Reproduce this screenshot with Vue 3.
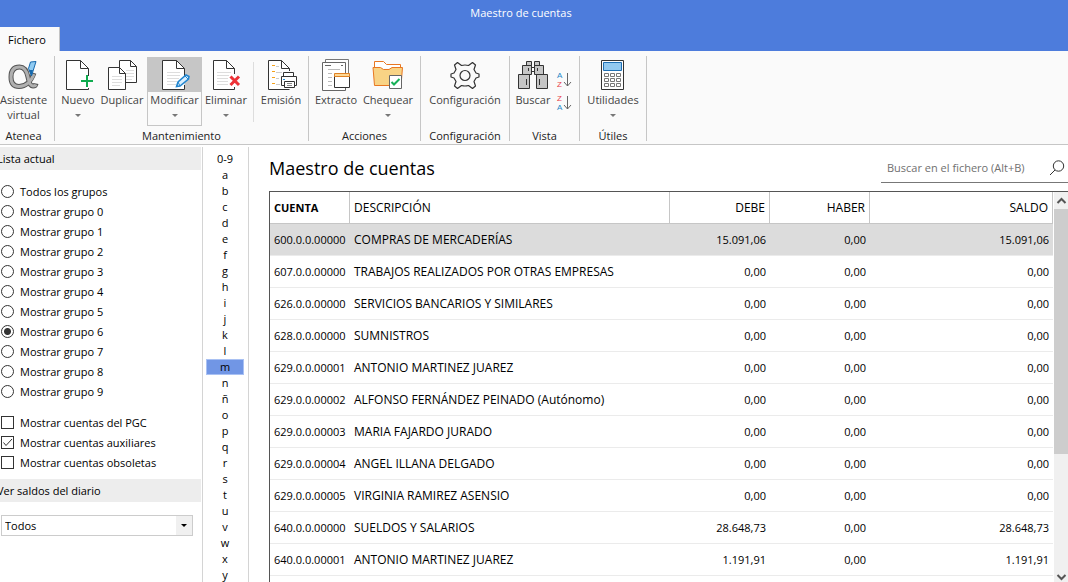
<script setup>
import { ref } from 'vue'

const groupOptions = ['Todos los grupos', ...Array.from({ length: 10 }, (_, i) => `Mostrar grupo ${i}`)]
const group = ref('Mostrar grupo 6')

const checks = ref([
  { label: 'Mostrar cuentas del PGC', on: false },
  { label: 'Mostrar cuentas auxiliares', on: true },
  { label: 'Mostrar cuentas obsoletas', on: false },
])

const diary = ref('Todos')
const search = ref('')
const letters = ['0-9', ...'abcdefghijklmnñopqrstuvwxy']
const letter = ref('m')

const selected = ref(0)
const rows = [
  ['600.0.0.00000', 'COMPRAS DE MERCADERÍAS', '15.091,06', '0,00', '15.091,06'],
  ['607.0.0.00000', 'TRABAJOS REALIZADOS POR OTRAS EMPRESAS', '0,00', '0,00', '0,00'],
  ['626.0.0.00000', 'SERVICIOS BANCARIOS Y SIMILARES', '0,00', '0,00', '0,00'],
  ['628.0.0.00000', 'SUMNISTROS', '0,00', '0,00', '0,00'],
  ['629.0.0.00001', 'ANTONIO MARTINEZ JUAREZ', '0,00', '0,00', '0,00'],
  ['629.0.0.00002', 'ALFONSO FERNÁNDEZ PEINADO (Autónomo)', '0,00', '0,00', '0,00'],
  ['629.0.0.00003', 'MARIA FAJARDO JURADO', '0,00', '0,00', '0,00'],
  ['629.0.0.00004', 'ANGEL ILLANA DELGADO', '0,00', '0,00', '0,00'],
  ['629.0.0.00005', 'VIRGINIA RAMIREZ ASENSIO', '0,00', '0,00', '0,00'],
  ['640.0.0.00000', 'SUELDOS Y SALARIOS', '28.648,73', '0,00', '28.648,73'],
  ['640.0.0.00001', 'ANTONIO MARTINEZ JUAREZ', '1.191,91', '0,00', '1.191,91'],
]
</script>

<template>
  <div class="app">
    <header class="titlebar">
      <div class="title">Maestro de cuentas</div>
      <nav class="tabs"><button class="tab">Fichero</button></nav>
    </header>

    <div class="ribbon">
      <section class="group atenea">
        <div class="tools">
          <button class="tool">
            <span class="icon">
              <svg width="32" height="32" viewBox="0 0 32 32" fill="none">
                <path d="M26 14 Q21 27.500 11 27.500 Q3 27.500 3 18 Q3 8 11.500 8 Q18 8 20 18 Q21.500 27 25 27 Q27.500 27 28 24.500" stroke="#555" stroke-width="5" />
                <path d="M26 15 Q21 27.500 11 27.500 Q3 27.500 3 18 Q3 8 11.500 8 Q18 8 20 18 Q21.500 27 25 27 Q27.500 27 28 25.500" stroke="#b0b0b0" stroke-width="3" />
                <path d="M22.500 3 L28 2.500 L23.500 17 L20.500 9.500 Z" fill="#8fcbf2" stroke="#1769ad" />
                <path d="M21 11 L25 11 L23.500 17 Z" fill="#1769ad" />
              </svg>
            </span>
            <span class="caption">Asistente<br>virtual</span>
          </button>
        </div>
        <h2>Atenea</h2>
      </section>

      <section class="group mant">
        <div class="tools start">
          <button class="tool w44">
            <span class="icon">
              <svg width="32" height="32" viewBox="0 0 32 32" fill="none">
                <path d="M26.500 17 V9.500 L18.500 1.500 H4.500 V30.500 H26.500 V29" fill="#fff" stroke="#333" />
                <path d="M18.500 1.500 V9.500 H26.500" stroke="#333" />
                <path d="M25 16 V28 M19 22 H31" stroke="#10ab4f" stroke-width="2" />
              </svg>
            </span>
            <span class="caption">Nuevo</span><i class="arrow"></i>
          </button>
          <button class="tool w44">
            <span class="icon">
              <svg width="32" height="32" viewBox="0 0 32 32" fill="none">
                <path d="M13.500 1.500 H24.500 L30.500 7.500 V23.500 H13.500 Z" fill="#fff" stroke="#333" />
                <path d="M24.500 1.500 V7.500 H30.500" stroke="#333" />
                <path d="M20 11.500 H28 M20 14.500 H28 M20 17.500 H28 M20 20.500 H26" stroke="#ddd" />
                <path d="M2.500 8.500 H13.500 L19.500 14.500 V30.500 H2.500 Z" fill="#fff" stroke="#333" />
                <path d="M13.500 8.500 V14.500 H19.500" stroke="#333" />
                <path d="M6 17.500 H16 M6 20.500 H16 M6 23.500 H16 M6 26.500 H14" stroke="#ddd" />
              </svg>
            </span>
            <span class="caption">Duplicar</span>
          </button>
          <button class="tool w55 active">
            <span class="icon">
              <svg width="32" height="32" viewBox="0 0 32 32" fill="none">
                <path d="M25.500 18 V9.500 L17.500 1.500 H3.500 V30.500 H25.500 V26" fill="#fff" stroke="#333" />
                <path d="M17.500 1.500 V9.500 H25.500" stroke="#333" />
                <path d="M8 13.500 H21 M8 16.500 H21 M8 19.500 H20 M8 22.500 H18 M8 25.500 H17" stroke="#ddd" />
                <path d="M17.500 27.500 L19 23 L27 16 L30 17.500 L29.500 20 L21 27 Z" fill="#d9efff" stroke="#2286cf" stroke-width="1.500" />
                <path d="M19 23 L21 27 M26 17 L29 20" stroke="#2286cf" />
              </svg>
            </span>
            <span class="caption">Modificar</span><i class="arrow"></i>
          </button>
          <button class="tool w48">
            <span class="icon">
              <svg width="32" height="32" viewBox="0 0 32 32" fill="none">
                <path d="M24.500 15 V9.500 L16.500 1.500 H3.500 V30.500 H24.500 V28" fill="#fff" stroke="#333" />
                <path d="M16.500 1.500 V9.500 H24.500" stroke="#333" />
                <path d="M7 13.500 H21 M7 16.500 H19 M7 19.500 H18 M7 22.500 H18 M7 25.500 H18" stroke="#ddd" />
                <path d="M20.500 17.500 L29 26 M29 17.500 L20.500 26" stroke="#ed3237" stroke-width="3" />
              </svg>
            </span>
            <span class="caption">Eliminar</span><i class="arrow"></i>
          </button>
          <span class="divider"></span>
          <button class="tool w54">
            <span class="icon">
              <svg width="32" height="32" viewBox="0 0 32 32" fill="none">
                <path d="M24.500 12 V9.500 L16.500 1.500 H3.500 V30.500 H24.500" fill="#fff" stroke="#333" />
                <path d="M16.500 1.500 V9.500 H24.500" stroke="#333" />
                <path d="M7 6.500 H10 M7 12.500 H10 M7 18.500 H10 M7 24.500 H10" stroke="#f5a21b" />
                <path d="M11 7.500 H14 M11 13.500 H17 M11 19.500 H14 M11 25.500 H15" stroke="#ccc" />
                <path d="M18.500 17.500 V13.500 H28.500 V17.500" fill="#fff" stroke="#333" />
                <path d="M16.500 17.500 H31.500 V26.500 H16.500 Z" fill="#fff" stroke="#333" />
                <path d="M19.500 22.500 H29.500 V28.500 H19.500 Z" fill="#fff" stroke="#333" />
                <path d="M22 24.500 H27 M22 26.500 H27" stroke="#888" />
                <path d="M18 20.500 H20" stroke="#1d8ad6" />
              </svg>
            </span>
            <span class="caption">Emisión</span>
          </button>
        </div>
        <h2>Mantenimiento</h2>
      </section>

      <section class="group acciones">
        <div class="tools start">
          <button class="tool w52">
            <span class="icon">
              <svg width="32" height="32" viewBox="0 0 32 32" fill="none">
                <path d="M5.500 0.500 H28.500 V28.500 H5.500 Z" fill="#fff" stroke="#777" />
                <path d="M2.500 3.500 H25.500 V31.500 H2.500 Z" fill="#fff" stroke="#666" />
                <path d="M5 6.500 H11 M21 6.500 H23" stroke="#666" />
                <path d="M8 10.500 H20 M8 14.500 H12 M8 18.500 H12 M8 22.500 H12 M8 26.500 H12" stroke="#bbb" />
                <path d="M14.500 17.500 H29.500 V28.500 H14.500 Z" fill="#fff" stroke="#333" />
                <path d="M14.500 14.500 H29.500 V17.500 H14.500 Z" fill="#fdd794" stroke="#df8124" />
              </svg>
            </span>
            <span class="caption">Extracto</span>
          </button>
          <button class="tool w52">
            <span class="icon">
              <svg width="32" height="32" viewBox="0 0 32 32" fill="none">
                <path d="M2.500 9 V2.500 H11.500 L14.500 5.500 H28.500 V9" fill="#fff" stroke="#e87722" />
                <path d="M1 8.500 H8.500 L11.500 10.500 H17 L20 8.500 H30.500 L29 26.500 H2.500 Z" fill="#f8d385" stroke="#e87722" />
                <path d="M17.500 16.500 H29.500 V29.500 H17.500 Z" fill="#fff" stroke="#666" />
                <path d="M19.500 23 L22 25.500 L27.500 20" stroke="#17b057" stroke-width="2" />
              </svg>
            </span>
            <span class="caption">Chequear</span><i class="arrow"></i>
          </button>
        </div>
        <h2>Acciones</h2>
      </section>

      <section class="group config">
        <div class="tools">
          <button class="tool">
            <span class="icon">
              <svg width="32" height="32" viewBox="0 0 32 32" fill="none" stroke="#333" stroke-width="1.200" stroke-linejoin="round">
                <path d="M8.500 3.500 L12.500 6.500 Q16 5.500 19.500 6.500 L23.500 3.500 L26.500 6 L25 10.500 L27 14 L30 15 V18 L27 19 L25 22.500 L26.500 27 L23.500 29.500 L19.500 26.500 Q16 27.500 12.500 26.500 L8.500 29.500 L5.500 27 L7 22.500 L5 19 L2 18 V15 L5 14 L7 10.500 L5.500 6 Z" />
                <circle cx="16" cy="16.500" r="5" />
              </svg>
            </span>
            <span class="caption">Configuración</span>
          </button>
        </div>
        <h2>Configuración</h2>
      </section>

      <section class="group vista">
        <div class="tools start">
          <button class="tool w46">
            <span class="icon">
              <svg width="32" height="32" viewBox="0 0 32 32" stroke="#333" fill="#c6c6c6">
                <path d="M9.500 2.500 H14.500 V7.500 H9.500 Z M17.500 2.500 H22.500 V7.500 H17.500 Z" />
                <path d="M14.500 8.500 H17.500 V12.500 H14.500 Z" fill="#fff" />
                <path d="M5.500 6.500 H14.500 V15.500 H5.500 Z M17.500 6.500 H26.500 V15.500 H17.500 Z" />
                <path d="M1.500 15.500 H12.500 V29.500 H1.500 Z M19.500 15.500 H30.500 V29.500 H19.500 Z" />
                <path d="M11.500 9 V12 M20.500 9 V12 M9.500 20 V26 M22.500 20 V26" />
              </svg>
            </span>
            <span class="caption">Buscar</span>
          </button>
          <div class="sorts">
            <button aria-label="Orden ascendente">
              <svg width="16" height="20" viewBox="0 0 16 20">
                <text x="1" y="8" class="glyph" fill="#2688c8">A</text>
                <text x="1" y="17" class="glyph" fill="#e8424a">Z</text>
                <path d="M11.500 3 V16 M8 12 L11.500 16 L15 12" fill="none" stroke="#666" />
              </svg>
            </button>
            <button aria-label="Orden descendente">
              <svg width="16" height="20" viewBox="0 0 16 20">
                <text x="1" y="8" class="glyph" fill="#e8424a">Z</text>
                <text x="1" y="17" class="glyph" fill="#2688c8">A</text>
                <path d="M11.500 3 V16 M8 12 L11.500 16 L15 12" fill="none" stroke="#666" />
              </svg>
            </button>
          </div>
        </div>
        <h2>Vista</h2>
      </section>

      <section class="group utiles">
        <div class="tools">
          <button class="tool">
            <span class="icon">
              <svg width="32" height="32" viewBox="0 0 32 32" fill="none">
                <path d="M4.500 1.500 H26.500 V30.500 H4.500 Z" fill="#fff" stroke="#333" />
                <path d="M6.500 3.500 H24.500 V11.500 H6.500 Z" fill="#92c9f0" stroke="#1e6fb4" />
                <path d="M7.500 14.500 h4 v3 h-4 z m6 0 h4 v3 h-4 z m6 0 h4 v3 h-4 z M7.500 19.500 h4 v3 h-4 z m6 0 h4 v3 h-4 z m6 0 h4 v3 h-4 z M7.500 24.500 h4 v3 h-4 z m6 0 h4 v3 h-4 z m6 0 h4 v3 h-4 z" stroke="#777" />
              </svg>
            </span>
            <span class="caption">Utilidades</span><i class="arrow"></i>
          </button>
        </div>
        <h2>Útiles</h2>
      </section>
    </div>

    <div class="body">
      <aside class="sidebar">
        <h3>Lista actual</h3>
        <div class="options">
          <label v-for="g in groupOptions" :key="g">
            <input v-model="group" type="radio" name="grupo" :value="g">{{ g }}
          </label>
        </div>
        <div class="options checks">
          <label v-for="c in checks" :key="c.label">
            <span class="box">
              <input v-model="c.on" type="checkbox">
              <svg v-if="c.on" width="13" height="13" viewBox="0 0 13 13"><path d="M2.500 6.500 L5 9.500 L11 3" fill="none" stroke="#333" /></svg>
            </span>{{ c.label }}
          </label>
        </div>
        <h3 id="saldos">Ver saldos del diario</h3>
        <div class="combo">
          <select v-model="diary" aria-labelledby="saldos"><option>Todos</option></select>
          <span class="drop"><i></i></span>
        </div>
      </aside>

      <nav class="letters">
        <button v-for="l in letters" :key="l" :class="{ on: l === letter }" @click="letter = l">{{ l }}</button>
      </nav>

      <main>
        <div class="head">
          <h1>Maestro de cuentas</h1>
          <label class="search">
            <input v-model="search" type="text" placeholder="Buscar en el fichero (Alt+B)" aria-label="Buscar en el fichero">
            <svg width="16" height="16" viewBox="0 0 16 16" fill="none" stroke="#333"><circle cx="9.500" cy="6" r="5.200" /><path d="M6 10 L1 15" /></svg>
          </label>
        </div>
        <div class="grid">
          <div class="sheet">
            <table>
              <colgroup><col class="c1"><col class="c2"><col class="c3"><col class="c3"><col></colgroup>
              <thead>
                <tr><th class="sorted">CUENTA</th><th>DESCRIPCIÓN</th><th class="num">DEBE</th><th class="num">HABER</th><th class="num">SALDO</th></tr>
              </thead>
              <tbody>
                <tr v-for="(r, i) in rows" :key="r[0]" :class="{ selected: i === selected }" @click="selected = i">
                  <td v-for="(v, k) in r" :key="k" :class="{ num: k > 1, figures: k !== 1 }">{{ v }}</td>
                </tr>
              </tbody>
            </table>
          </div>
          <div class="scrollbar">
            <svg width="14" height="17" viewBox="0 0 14 17"><path d="M3.500 11 L7.500 7 L11.500 11" fill="none" stroke="#555" stroke-width="2" /></svg>
            <div class="track"><div class="thumb"></div></div>
            <svg width="14" height="12" viewBox="0 0 14 12"><path d="M3.500 5 L7.500 9 L11.500 5" fill="none" stroke="#555" stroke-width="2" /></svg>
          </div>
        </div>
      </main>
    </div>
  </div>
</template>

<style>
body { margin: 0; overflow: hidden; }
</style>

<style scoped>
.app {
  display: flex;
  flex-direction: column;
  height: 100vh;
  background: #fff;
  color: #000;
  font: 11px/16px "Open Sans", "Noto Sans", sans-serif;
}
.app * { box-sizing: border-box; }
h1, h2, h3 { margin: 0; font-weight: 400; }
button, input, select { font: inherit; color: inherit; margin: 0; padding: 0; border: 0; background: none; }
.titlebar { background: #4d7cdc; flex: none; }
.title { height: 27px; line-height: 25px; text-align: center; color: #fff; padding-right: 26px; }
.tabs { display: flex; height: 24px; }
.tab { width: 60px; padding: 2px 5px 0 0; background: #fafafa; border-right: 1px solid #c4c4c4; }
.ribbon {
  display: flex;
  flex: none;
  height: 94px;
  padding: 5px 0 3px;
  background: #fafafa;
  border-bottom: 1px solid #c6c6c6;
}
.group { display: flex; flex-direction: column; border-right: 1px solid #c6c6c6; text-align: center; }
.atenea { width: 55px; padding-right: 7px; }
.mant { width: 254px; }
.acciones { width: 112px; }
.config { width: 89px; }
.vista { width: 70px; }
.utiles { width: 67px; }
.group h2 { font-size: 11px; line-height: 10px; color: #222; }
.tools { display: flex; flex: 1; justify-content: center; align-items: flex-start; padding-top: 1px; }
.mant .start, .acciones .start { padding-left: 1px; }
.start { justify-content: flex-start; }
.tool { display: flex; flex-direction: column; align-items: center; height: 69px; color: #444; white-space: nowrap; }
.icon { display: flex; justify-content: center; align-items: flex-start; width: 100%; height: 35px; padding-top: 2px; }
.caption { line-height: 15px; }
.w44 { width: 44px; }
.w46 { width: 46px; }
.w48 { width: 48px; }
.w52 { width: 52px; }
.w54 { width: 54px; }
.w55 { width: 55px; }
.active { margin-left: 3px; border: 1px solid #c6c6c6; border-top: 0; }
.active .icon { background: #c6c6c6; }
.arrow { margin-top: 7px; border: 3px solid transparent; border-top-color: #777; border-bottom: 0; }
.divider { width: 1px; height: 60px; margin: 5px 0 0 3px; background: #ddd; }
.sorts { display: flex; flex-direction: column; gap: 3px; padding-top: 13px; }
.sorts button { height: 20px; }
.sorts svg { display: block; }
.glyph { font: 8px "Liberation Sans", sans-serif; }

.body { display: flex; flex: 1; min-height: 0; padding-top: 2px; }
.sidebar { width: 203px; flex: none; border-right: 1px solid #d4d4d4; overflow: hidden; }
.sidebar h3 { height: 23px; margin-right: 1px; line-height: 23px; font-size: 11px; text-indent: -3px; background: #ededed; white-space: nowrap; }
.options { padding: 12px 0 0 1px; }
.options label { display: flex; align-items: center; gap: 6px; height: 20px; }
.options input { appearance: none; display: block; width: 13px; height: 13px; border: 1px solid #333; background: #fff; }
.options input[type="radio"] { margin-bottom: 1px; border-radius: 50%; }
.options input[type="radio"]:checked { background: radial-gradient(circle, #333 3px, #fff 4px); }
.checks { padding: 11px 0 6px 1px; }
.box { display: grid; margin-bottom: 1px; }
.box > * { grid-area: 1 / 1; }
.box svg { z-index: 1; pointer-events: none; }
.combo { display: flex; height: 21px; margin: 13px 9px 0 1px; border: 1px solid #ccc; }
.combo select { flex: 1; appearance: none; padding-left: 3px; }
.drop { display: flex; align-items: center; justify-content: center; width: 16px; background: #f0f0f0; }
.drop i { border: 3px solid transparent; border-top-color: #000; border-bottom: 0; }

.letters { display: flex; flex-direction: column; flex: none; width: 46px; padding: 4px 4px 0 3px; border-right: 1px solid #d4d4d4; }
.letters button { height: 16px; flex: none; line-height: 14px; }
.letters .on { background: #7196e5; border: 1px solid #a9c1f3; }

main { flex: 1; min-width: 0; display: flex; flex-direction: column; padding-left: 20px; }
.head { display: flex; justify-content: space-between; align-items: flex-start; height: 44px; flex: none; }
h1 { font-size: 18px; line-height: 43px; }
.search { display: flex; align-items: center; width: 187px; height: 30px; margin-top: 6px; padding: 0 3px 0 6px; border-bottom: 1px solid #777; }
.search input { flex: 1; min-width: 0; outline: 0; }
.search input::placeholder { color: #707070; opacity: 1; }
.grid { display: flex; flex: 1; min-height: 0; border-top: 1px solid #555; border-left: 1px solid #555; }
.sheet { flex: 1; min-width: 0; overflow: hidden; }
table { width: 100%; table-layout: fixed; border-collapse: separate; border-spacing: 0; font-size: 12px; }
.c1 { width: 80px; }
.c2 { width: 320px; }
.c3 { width: 100px; }
th, td { height: 32px; padding: 0 0 0 4px; text-align: left; font-weight: 400; white-space: nowrap; }
th { border-right: 1px solid #c6c6c6; border-bottom: 1px solid #c6c6c6; }
td { border-bottom: 1px solid #ebebeb; }
.sorted { font-size: 11px; font-weight: 700; }
.figures { font-size: 11px; }
.num { text-align: right; padding-right: 4px; }
.selected td { background: #dcdcdc; }
.scrollbar { display: flex; flex-direction: column; width: 14px; margin-left: 1px; background: #f0f0f0; }
.scrollbar svg { flex: none; }
.track { flex: 1; }
.thumb { height: 68%; background: #cdcdcd; }
</style>
